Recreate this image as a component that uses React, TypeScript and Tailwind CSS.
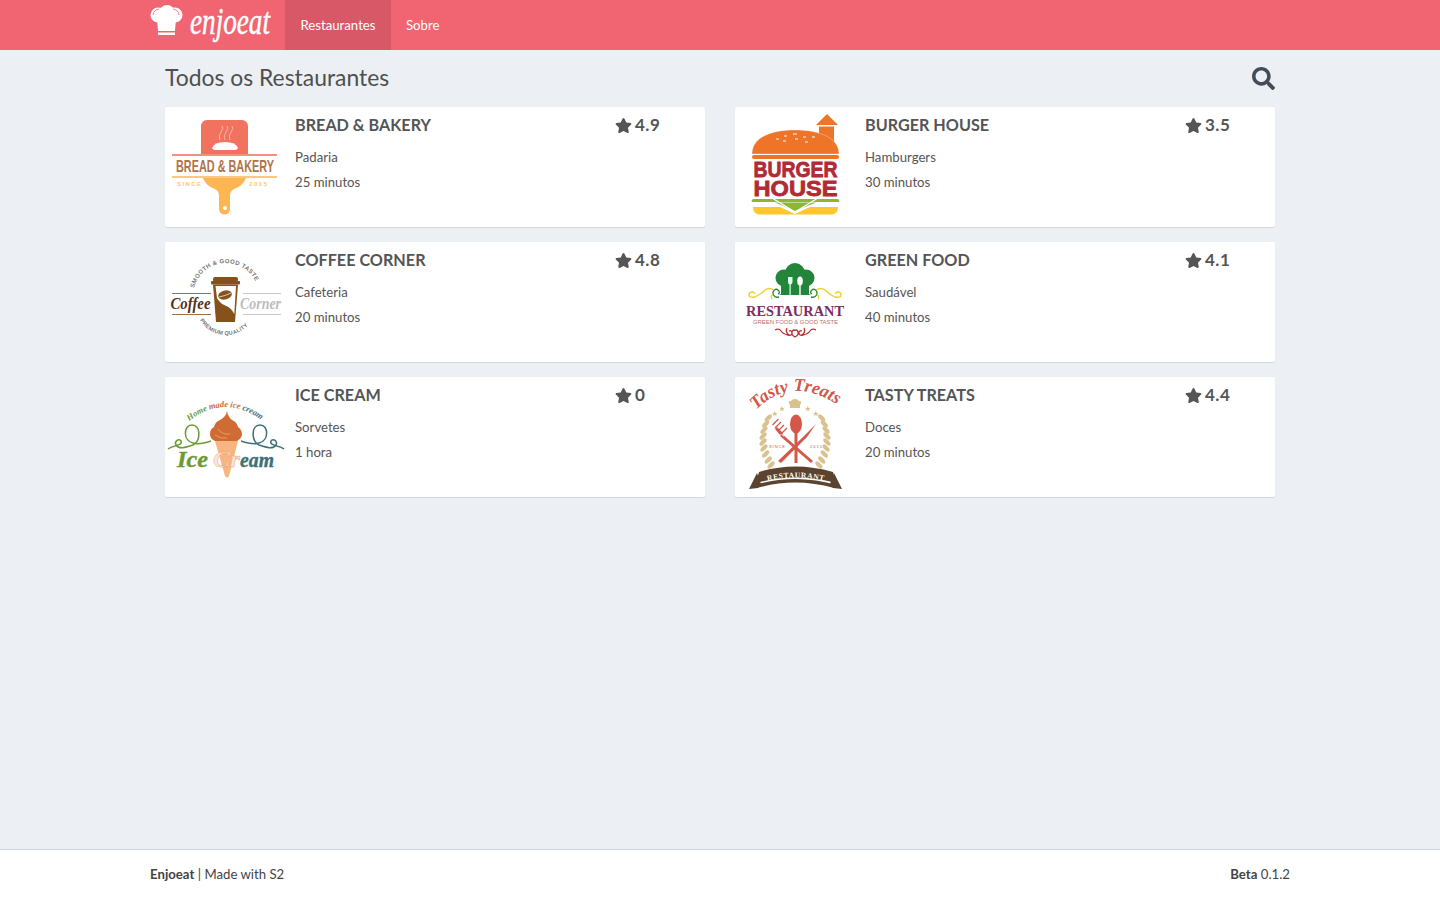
import React from "react";
import { FaStar, FaSearch } from "react-icons/fa";

const serif = '"Liberation Serif", serif';
const sans = '"Liberation Sans", sans-serif';

function BrandLogo() {
  return (
    <svg viewBox="0 0 122 46" className="w-[122px] h-[46px] -ml-[1px]">
      <g fill="#fff">
        <circle cx="9" cy="13" r="7.500" />
        <circle cx="18" cy="11" r="8" />
        <circle cx="26" cy="13" r="7.500" />
        <path d="M8 16h19l-1 13H9z" />
        <rect x="9" y="30.500" width="17" height="2.500" />
      </g>
      <path d="M4 13q.5-5 6-6M30 13q-.5-5-6-6" stroke="#f16471" strokeWidth=".8" fill="none" />
      <text x="41" y="32" fontFamily={serif} fontStyle="italic" fontSize="37" fill="#fff" stroke="#fff" strokeWidth=".5" textLength="80" lengthAdjust="spacingAndGlyphs">enjoeat</text>
    </svg>
  );
}

function BreadLogo() {
  return (
    <svg viewBox="0 0 120 120" className="w-[120px] h-[120px] shrink-0">
      <path d="M36 19a6 6 0 0 1 6-6h35a6 6 0 0 1 6 6v29H36z" fill="#f1725f" />
      <path d="M55 33q-2-4 1-8t1-6M60 33q-2-4 1-8t1-6M65 33q-2-4 1-8t1-6" stroke="#f7b3a6" strokeWidth="1" fill="none" />
      <path d="M47 41q2-6 13-6t13 6q-1 2-3 2H50q-2 0-3-2z" fill="#fff" />
      <rect x="7" y="47" width="105" height="2" fill="#f58f7e" />
      <text x="11" y="65" fontFamily={sans} fontSize="17" fontWeight="700" fill="#b0734a" textLength="98" lengthAdjust="spacingAndGlyphs">BREAD &amp; BAKERY</text>
      <rect x="7" y="69" width="105" height="2" fill="#fdc681" />
      <path d="M38 71h43q-3 8-12 11-4 2-4 7v13a5 5 0 0 1-11 0V89q0-5-4-7-9-3-12-11z" fill="#fdb652" />
      <circle cx="60" cy="101" r="2" fill="#fff" />
      <text x="12" y="78.500" fontFamily={sans} fontSize="6" fontWeight="700" fill="#fdc681" textLength="24">SINCE</text>
      <text x="84" y="78.500" fontFamily={sans} fontSize="6" fontWeight="700" fill="#fdc681" textLength="18">2015</text>
    </svg>
  );
}

function BurgerLogo() {
  return (
    <svg viewBox="0 0 120 120" className="w-[120px] h-[120px] shrink-0">
      <path d="M81 18 92 7l11 11z" fill="#ee7427" />
      <rect x="84" y="19.500" width="15" height="16" fill="#ee7427" />
      <path d="M17 47C17 31 35 23 60 23S104 31 104 47z" fill="#ee7427" stroke="#fff" strokeWidth=".3" />
      <rect x="17" y="48" width="87" height="4" rx="2" fill="#ee7427" />
      <path d="M41 32h3M49 29h3M58 27h4M68 30h3M77 30h3M48 34h3M60 32h3M70 35h3" stroke="#fff" strokeWidth="1" />
      <text x="18.500" y="70" fontFamily={sans} fontSize="22" fontWeight="700" fill="#b12a34" stroke="#b12a34" strokeWidth=".8" textLength="84" lengthAdjust="spacingAndGlyphs">BURGER</text>
      <text x="18.500" y="89" fontFamily={sans} fontSize="22" fontWeight="700" fill="#b12a34" stroke="#b12a34" strokeWidth=".8" textLength="84" lengthAdjust="spacingAndGlyphs">HOUSE</text>
      <path d="M17 95a2 2 0 0 1 2-3h83a2 2 0 0 1 2 3z" fill="#8db632" />
      <path d="M40 95.500h41L60 104z" fill="#8db632" />
      <path d="M18 100h27l15 7 15-7h28q0 7-6 7.500H24q-6-.5-6-7.500z" fill="#fdc72f" />
      <path d="M37 91l23 14 23-14" stroke="#fff" strokeWidth="1.300" fill="none" />
    </svg>
  );
}

function CoffeeLogo() {
  return (
    <svg viewBox="0 0 120 120" className="w-[120px] h-[120px] shrink-0">
      <defs>
        <path id="cTop" d="M29 46A33 33 0 0 1 93 46" />
        <path id="cBot" d="M35 78A30 30 0 0 0 87 78" />
      </defs>
      <text fontFamily={sans} fontSize="6" fontWeight="700" fill="#777" letterSpacing=".35">
        <textPath href="#cTop">SMOOTH &amp; GOOD TASTE</textPath>
      </text>
      <text fontFamily={sans} fontSize="5.500" fontWeight="700" fill="#777" letterSpacing=".3">
        <textPath href="#cBot">PREMIUM QUALITY</textPath>
      </text>
      <rect x="48" y="35" width="25" height="5" rx="2" fill="#85521c" />
      <rect x="46" y="39" width="29" height="3.500" rx="1" fill="#85521c" />
      <path d="M48 42.500h25l-3 37.500H51z" fill="#85521c" />
      <path d="M50.500 44h20.500l-1.700 28q-3-6-8-8-7-3-9.300-8z" fill="#fff" />
      <ellipse cx="60" cy="53" rx="7" ry="4.500" fill="#85521c" transform="rotate(-15 60 53)" />
      <path d="M54 55q6-1 12-4" stroke="#fff" strokeWidth=".7" fill="none" />
      <rect x="7" y="51" width="39" height=".8" fill="#85521c" />
      <rect x="7" y="72" width="39" height=".8" fill="#85521c" />
      <rect x="78" y="51" width="38" height=".8" fill="#bbb" />
      <rect x="78" y="72" width="38" height=".8" fill="#bbb" />
      <text x="5.500" y="67" fontFamily={serif} fontStyle="italic" fontWeight="700" fontSize="17" fill="#54301a" textLength="40" lengthAdjust="spacingAndGlyphs">Coffee</text>
      <text x="75" y="67" fontFamily={serif} fontStyle="italic" fontWeight="700" fontSize="16" fill="#bdbdbd" textLength="41" lengthAdjust="spacingAndGlyphs">Corner</text>
    </svg>
  );
}

function GreenLogo() {
  return (
    <svg viewBox="0 0 120 120" className="w-[120px] h-[120px] shrink-0">
      <circle cx="60" cy="31" r="10" fill="#22853a" />
      <circle cx="49" cy="36" r="8.500" fill="#22853a" />
      <circle cx="71" cy="36" r="8.500" fill="#22853a" />
      <path d="M46 38h28v14l2 1H44l2-1z" fill="#22853a" />
      <ellipse cx="65" cy="39" rx="2.800" ry="4.500" fill="#fff" />
      <rect x="64.300" y="42" width="1.400" height="11" fill="#fff" />
      <path d="M53 35v5q0 2 1.500 2.500V53h1.200V42.500Q57.500 42 57.500 40v-5" fill="#dfe" />
      <path d="M44 55q-4 1-5.500-2t1-5 4.500 1q1 2-1 3M76 55q4 1 5.500-2t-1-5-4.500 1q-1 2 1 3" stroke="#22853a" strokeWidth="1.300" fill="none" />
      <path d="M39 48q-5-3-9 0-5 5-10 7-6 1-6-2t3-3 2 2M81 48q5-3 9 0 5 5 10 7 6 1 6-2t-3-3-2 2M38 52q-3 3-1 5M82 52q3 3 1 5" stroke="#efce2d" strokeWidth="1.300" fill="none" />
      <text x="11" y="74" fontFamily={serif} fontSize="15" fontWeight="700" fill="#7d2d62" textLength="98" lengthAdjust="spacingAndGlyphs">RESTAURANT</text>
      <text x="18" y="81.500" fontFamily={sans} fontSize="4.500" fill="#b5706d" textLength="85" lengthAdjust="spacingAndGlyphs">GREEN FOOD &amp; GOOD TASTE</text>
      <path d="M40 88q4-2 6 1t7 4q4 1 4-2t-3-2M81 88q-4-2-6 1t-7 4q-4 1-4-2t3-2M52 86q-2 4 2 7M69 86q2 4-2 7M60 95q-4-2-3-5 1-3 3-1.500 2-1.500 3 1.500 1 3-3 5z" stroke="#bd2f2f" strokeWidth="1.300" fill="none" />
    </svg>
  );
}

const iceLoop = "M3 72C8 68 18 69 16 64C14 61 9 64 11 68C14 73 22 70 28 68C36 64 36 48 27 48C18 48 18 64 28 66C34 68 40 66 46 64";

function IceLogo() {
  return (
    <svg viewBox="0 0 120 120" className="w-[120px] h-[120px] shrink-0">
      <defs>
        <path id="iTop" d="M24 44Q60 16 98 44" />
      </defs>
      <text fontFamily={serif} fontStyle="italic" fontWeight="700" fontSize="8.500">
        <textPath href="#iTop"><tspan fill="#6c9a34">Home </tspan><tspan fill="#d06c33">made </tspan><tspan fill="#d06c33">ice </tspan><tspan fill="#3e7177">cream</tspan></textPath>
      </text>
      <path d="M50 64h23l-9 35q-2 3-4 0z" fill="#f7b582" />
      <path d="M62 34q1 6 5 9 5 2 6 7 4 3 4 7t-5 7H50q-5-2-5-7t4-7q1-5 6-7 6-3 7-9z" fill="#d06c33" />
      <path d="M53 52q4 6 12 5M50 58q5 4 12 3" stroke="#f1a476" strokeWidth=".8" fill="none" />
      <path d={iceLoop} stroke="#6c9a34" strokeWidth="1.500" fill="none" />
      <g transform="translate(122 0) scale(-1 1)">
        <path d={iceLoop} stroke="#3e7177" strokeWidth="1.500" fill="none" />
      </g>
      <text x="12" y="90" fontFamily={serif} fontStyle="italic" fontWeight="700" fontSize="24" fill="#6c9a34" stroke="#6c9a34" strokeWidth=".4" textLength="31" lengthAdjust="spacingAndGlyphs">Ice</text>
      <text x="48" y="90" fontFamily={serif} fontStyle="italic" fontWeight="700" fontSize="24" fill="#fce5d3" stroke="#e89a68" strokeWidth=".4" textLength="27" lengthAdjust="spacingAndGlyphs">Cr</text>
      <text x="75" y="90" fontFamily={serif} fontStyle="italic" fontWeight="700" fontSize="22" fill="#3e7177" stroke="#3e7177" strokeWidth=".4" textLength="34" lengthAdjust="spacingAndGlyphs">eam</text>
    </svg>
  );
}

function TastyLogo() {
  const ys = [41, 47, 53, 59, 65, 71, 77, 83, 88];
  return (
    <svg viewBox="0 0 120 120" className="w-[120px] h-[120px] shrink-0">
      <defs>
        <path id="tTop" d="M21 33Q58 -4 107 31" />
        <path id="tBan" d="M24 106Q60 95 98 106" />
      </defs>
      <text fontFamily={serif} fontStyle="italic" fontWeight="700" fontSize="18" fill="#d4574a">
        <textPath href="#tTop">Tasty Treats</textPath>
      </text>
      <path d="M55 28q-3-4 1-4 1-2 4-2t4 2q4 0 1 4v3H55z" fill="#d9c28f" />
      <path d="M46 31l.8-2 .8 2 2 0-1.500 1.200.5 2-1.800-1.200-1.800 1.200.5-2L45 31zM72 31l.8-2 .8 2 2 0-1.500 1.200.5 2-1.800-1.200-1.800 1.200.5-2-1.500-1.200zM39 36l.8-2 .8 2 2 0-1.500 1.200.5 2-1.800-1.200-1.800 1.200.5-2L37 36zM80 36l.8-2 .8 2 2 0-1.500 1.200.5 2-1.800-1.200-1.800 1.200.5-2-1.500-1.200z" fill="#d9c28f" />
      {ys.map((y, i) => {
        const dx = Math.abs(y - 62) * Math.abs(y - 62) * 0.012;
        return (
          <g key={i}>
            <ellipse cx={28 + dx} cy={y} rx="4.500" ry="2.200" fill="#d9c28f" transform={`rotate(-45 ${28 + dx} ${y})`} />
            <ellipse cx={92 - dx} cy={y} rx="4.500" ry="2.200" fill="#d9c28f" transform={`rotate(45 ${92 - dx} ${y})`} />
          </g>
        );
      })}
      <ellipse cx="61" cy="47" rx="6" ry="9.500" fill="#d4574a" />
      <rect x="59.500" y="55" width="3" height="31" fill="#d4574a" />
      <path d="M40 51l6-6M43 54l6-6M46 57l6-6M37.500 48l6-6" stroke="#d4574a" strokeWidth="1.200" />
      <path d="M40 52l5 6 1-1 3 3-2-5-5-5zM47 57l31 27-2 2-31-27z" fill="#d4574a" />
      <path d="M81 47 72 60 46 86l-3-2 25-24z" fill="#d4574a" />
      <text x="34" y="71" fontFamily={sans} fontSize="4" fill="#b55" textLength="16">SINCE</text>
      <text x="75" y="71" fontFamily={sans} fontSize="4" fill="#b55" textLength="12">2015</text>
      <path d="M24 95Q60 84 98 95l3 11Q60 95 21 106z" fill="#5b4330" />
      <path d="M22 96l-8 16 9-1 3-4zM99 96l8 16-9-1-3-4z" fill="#5b4330" />
      <path d="M19 108Q60 96 102 108l-3 3Q60 100 22 111z" fill="#5b4330" />
      <text fontFamily={serif} fontSize="7.500" fontWeight="700" fill="#fff" letterSpacing=".6" textAnchor="middle">
        <textPath href="#tBan" startOffset="50%">RESTAURANT</textPath>
      </text>
    </svg>
  );
}

const items = [
  { name: "BREAD & BAKERY", cat: "Padaria", time: "25 minutos", rating: "4.9", Logo: BreadLogo },
  { name: "BURGER HOUSE", cat: "Hamburgers", time: "30 minutos", rating: "3.5", Logo: BurgerLogo },
  { name: "COFFEE CORNER", cat: "Cafeteria", time: "20 minutos", rating: "4.8", Logo: CoffeeLogo },
  { name: "GREEN FOOD", cat: "Saudável", time: "40 minutos", rating: "4.1", Logo: GreenLogo },
  { name: "ICE CREAM", cat: "Sorvetes", time: "1 hora", rating: "0", Logo: IceLogo },
  { name: "TASTY TREATS", cat: "Doces", time: "20 minutos", rating: "4.4", Logo: TastyLogo },
];

export default function App() {
  return (
    <div className="min-h-screen flex flex-col bg-[#ecf0f5] text-[13.2px] text-[#444] font-['Lato',sans-serif]">
      <header className="h-[50px] bg-[#f16471] text-white">
        <div className="w-[1140px] mx-auto flex h-full">
          <div className="w-[135px] flex items-center">
            <BrandLogo />
          </div>
          <a className="w-[106px] pt-[1px] flex items-center justify-center bg-[#d85868]">Restaurantes</a>
          <a className="px-[15px] pt-[1px] flex items-center">Sobre</a>
        </div>
      </header>
      <main className="flex-1 w-[1110px] mx-auto">
        <div className="h-[57px] flex items-center justify-between">
          <h1 className="text-[22.900px] text-[#4f4f4f] leading-none pb-[2px]">Todos os Restaurantes</h1>
          <FaSearch className="w-[23px] h-[23px] text-[#444c57]" />
        </div>
        <div className="grid grid-cols-2 gap-x-[30px] gap-y-[15px]">
          {items.map((it) => (
            <div key={it.name} className="h-[120px] bg-white rounded-[2px] shadow-[0_1px_1px_rgba(0,0,0,0.1)] flex">
              <it.Logo />
              <div className="w-[330px] shrink-0 pl-[10px] text-[#555]">
                <div className="h-[36px] flex items-center text-[16.200px] font-bold text-[#555]">{it.name}</div>
                <div className="h-[25px] mt-[2px] flex items-center">{it.cat}</div>
                <div className="h-[25px] flex items-center">{it.time}</div>
              </div>
              <div className="h-[36px] flex items-center gap-[3px] text-[#555] font-bold text-[17px] tracking-[0.5px]">
                <FaStar className="w-[17px] h-[17px]" />
                <span>{it.rating}</span>
              </div>
            </div>
          ))}
        </div>
      </main>
      <footer className="h-[51px] bg-white border-t border-[#d2d6de]">
        <div className="w-[1140px] h-full mx-auto flex items-center justify-between">
          <div><b>Enjoeat</b> | Made with S2</div>
          <div><b>Beta</b> 0.1.2</div>
        </div>
      </footer>
    </div>
  );
}
